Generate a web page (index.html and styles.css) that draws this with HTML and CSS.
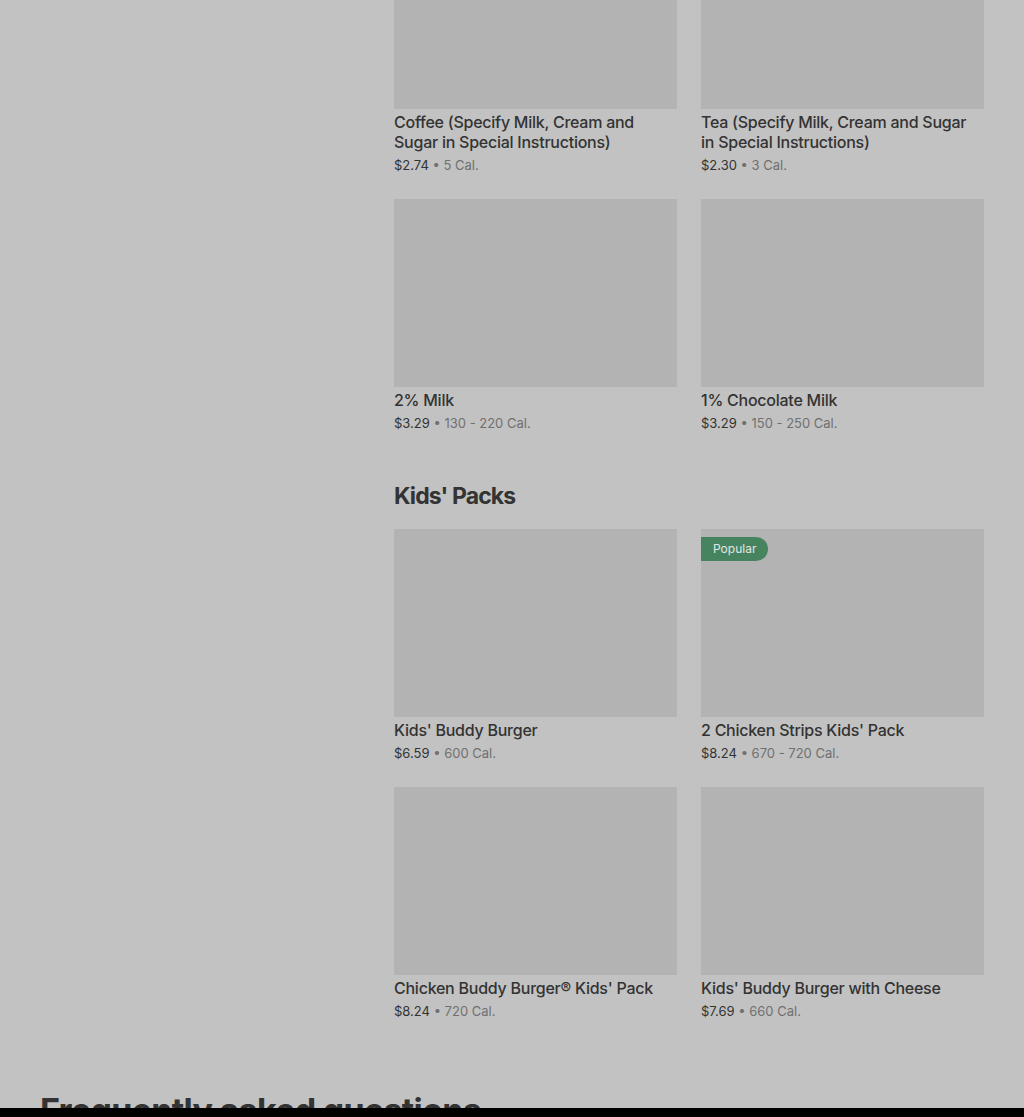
FILE: index.html
```html
<!DOCTYPE html>
<html lang="en">
<head>
  <meta charset="UTF-8">
  <meta name="viewport" content="width=device-width, initial-scale=1.0">
  <title>Menu</title>
  <link rel="stylesheet" href="styles.css">
</head>
<body>
  <div class="page">
    <aside class="sidebar"></aside>

    <main class="menu">
      <section class="menu-section first">
        <div class="item-grid">
          <div class="item">
            <div class="item-image"></div>
            <div class="item-title">Coffee (Specify Milk, Cream and Sugar in Special Instructions)</div>
            <div class="item-meta"><span class="price">$2.74</span> • <span class="cal">5 Cal.</span></div>
          </div>
          <div class="item">
            <div class="item-image"></div>
            <div class="item-title">Tea (Specify Milk, Cream and Sugar in Special Instructions)</div>
            <div class="item-meta"><span class="price">$2.30</span> • <span class="cal">3 Cal.</span></div>
          </div>
          <div class="item">
            <div class="item-image"></div>
            <div class="item-title">2% Milk</div>
            <div class="item-meta"><span class="price">$3.29</span> • <span class="cal">130 - 220 Cal.</span></div>
          </div>
          <div class="item">
            <div class="item-image"></div>
            <div class="item-title">1% Chocolate Milk</div>
            <div class="item-meta"><span class="price">$3.29</span> • <span class="cal">150 - 250 Cal.</span></div>
          </div>
        </div>
      </section>

      <section class="menu-section">
        <h2 class="section-title">Kids' Packs</h2>
        <div class="item-grid">
          <div class="item">
            <div class="item-image"></div>
            <div class="item-title">Kids' Buddy Burger</div>
            <div class="item-meta"><span class="price">$6.59</span> • <span class="cal">600 Cal.</span></div>
          </div>
          <div class="item">
            <div class="item-image">
              <span class="badge">Popular</span>
            </div>
            <div class="item-title">2 Chicken Strips Kids' Pack</div>
            <div class="item-meta"><span class="price">$8.24</span> • <span class="cal">670 - 720 Cal.</span></div>
          </div>
          <div class="item">
            <div class="item-image"></div>
            <div class="item-title">Chicken Buddy Burger® Kids' Pack</div>
            <div class="item-meta"><span class="price">$8.24</span> • <span class="cal">720 Cal.</span></div>
          </div>
          <div class="item">
            <div class="item-image"></div>
            <div class="item-title">Kids' Buddy Burger with Cheese</div>
            <div class="item-meta"><span class="price">$7.69</span> • <span class="cal">660 Cal.</span></div>
          </div>
        </div>
      </section>
    </main>
  </div>

  <section class="faq">
    <h2 class="faq-title">Frequently asked questions</h2>
  </section>

  <div class="bottom-bar"></div>
</body>
</html>
```

FILE: styles.css
```css
* {
  box-sizing: border-box;
  margin: 0;
  padding: 0;
}

body {
  font-family: Inter, "Noto Sans", sans-serif;
  background-color: #c2c2c2;
  color: #343434;
  overflow: hidden;
}

.page {
  display: grid;
  grid-template-columns: 330px 1fr;
  column-gap: 24px;
  padding: 0 40px;
  margin-top: -79px;
}

.menu-section {
  margin-top: 49px;
}

.menu-section.first {
  margin-top: 0;
}

.section-title {
  font-size: 23px;
  line-height: 28px;
  font-weight: 700;
  letter-spacing: -0.9px;
  color: #333;
  margin-bottom: 19px;
}

.item-grid {
  display: grid;
  grid-template-columns: 1fr 1fr;
  column-gap: 24px;
  row-gap: 24px;
}

.item {
  padding-bottom: 1px;
}

.item-image {
  position: relative;
  height: 188px;
  background-color: #b3b3b3;
}

.badge {
  position: absolute;
  top: 8px;
  left: 0;
  height: 24px;
  padding: 0 12px;
  border-radius: 0 12px 12px 0;
  background-color: #46845f;
  color: #e4e4e4;
  font-size: 12px;
  line-height: 24px;
}

.item-title {
  margin-top: 3px;
  padding-right: 6px;
  font-size: 16px;
  line-height: 20px;
  font-weight: 500;
  letter-spacing: -0.25px;
  color: #333;
}

.item-meta {
  margin-top: 4px;
  font-size: 13px;
  line-height: 18px;
  color: #707070;
}

.price {
  color: #333;
}

.faq {
  padding: 0 40px;
  margin-top: 70px;
}

.faq-title {
  font-size: 34px;
  line-height: 40px;
  font-weight: 700;
  letter-spacing: -0.7px;
  color: #333;
}

.bottom-bar {
  position: fixed;
  left: 0;
  right: 0;
  bottom: 0;
  height: 9px;
  background-color: #000;
}
```
